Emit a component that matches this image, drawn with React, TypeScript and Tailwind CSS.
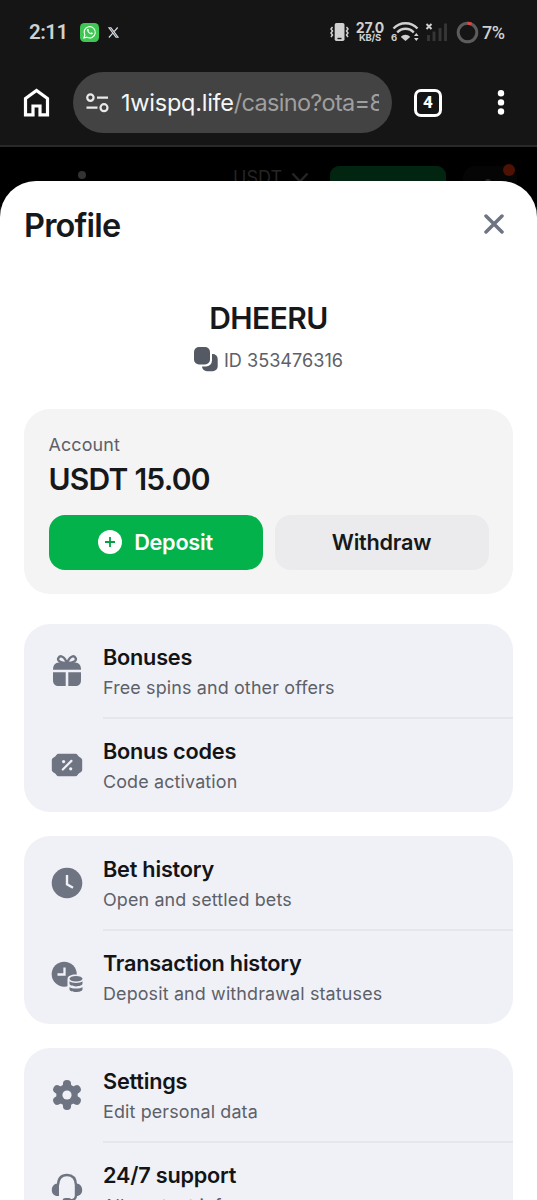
import type { ReactNode } from "react";

const ink = "#6f7482";

function GiftIcon() {
  return (
    <svg width="32" height="34" viewBox="0 0 32 34" fill={ink}>
      <path d="M15.800 9C9 8.800 6.300 6.800 7.300 4.200C8.800 .9 13.600 2 15.800 9ZM16.200 9C18.400 2 23.200 .9 24.700 4.200C25.700 6.800 23 8.800 16.200 9Z" fill="none" stroke={ink} strokeWidth="2.400" />
      <path d="M8 8.500h16c4 0 6 3 6 7.300H2c0-4.300 2-7.300 6-7.300Z" />
      <path d="M2 18.200h12.700V32H8c-4 0-6-2-6-6ZM17.300 18.200H30V26c0 4-2 6-6 6h-6.700Z" />
    </svg>
  );
}

function CouponIcon() {
  return (
    <svg width="32" height="32" viewBox="0 0 32 32">
      <path d="M7.500 4.800h17c1.800 0 2.200 1.600 3 2.400.9.900 3.700 1.700 3.700 4v9.600c0 2.300-2.800 3.100-3.700 4-.8.800-1.200 2.400-3 2.400h-17c-1.800 0-2.200-1.600-3-2.400-.9-.9-3.700-1.700-3.700-4v-9.600c0-2.300 2.800-3.100 3.700-4 .8-.8 1.200-2.400 3-2.400Z" fill={ink} />
      <path d="m11.800 20.500 8.600-8.600" stroke="#f0f1f6" strokeWidth="2.200" strokeLinecap="round" />
      <circle cx="12.600" cy="12.600" r="1.600" fill="#f0f1f6" />
      <circle cx="19.700" cy="19.800" r="1.600" fill="#f0f1f6" />
    </svg>
  );
}

function ClockIcon() {
  return (
    <svg width="32" height="32" viewBox="0 0 32 32">
      <circle cx="16" cy="16" r="15.300" fill={ink} />
      <path d="M16 8v9.300l6 3.400" fill="none" stroke="#f0f1f6" strokeWidth="2.400" />
    </svg>
  );
}

function TransactionIcon() {
  return (
    <svg width="32" height="32" viewBox="0 0 32 32">
      <circle cx="13.200" cy="13.200" r="12.500" fill={ink} />
      <path d="M13.500 6.500v7H6.500" fill="none" stroke="#f0f1f6" strokeWidth="2.300" />
      <path d="M16.500 18c0-3 3.500-4.500 8-4.500s8 1.500 8 4.500v14h-16Z" fill="#f0f1f6" />
      <ellipse cx="25" cy="17.800" rx="6.500" ry="2.800" fill={ink} />
      <path d="M18.500 20.300c2.500 2.100 10.500 2.100 13 0v2.300c0 3.700-13 3.700-13 0ZM18.500 26c2.500 2.100 10.500 2.100 13 0v2.300c0 3.700-13 3.700-13 0Z" fill={ink} />
    </svg>
  );
}

function GearIcon() {
  return (
    <svg width="32" height="32" viewBox="0 0 32 32">
      <g stroke={ink} strokeWidth="8.200" strokeLinecap="round">
        <path d="M16 5v22M6.300 10.400l19.400 11.200M6.300 21.600l19.400-11.200" />
      </g>
      <circle cx="16" cy="16" r="10.700" fill={ink} />
      <circle cx="16" cy="16" r="4.600" fill="#f0f1f6" />
    </svg>
  );
}

function HeadsetIcon() {
  return (
    <svg width="32" height="32" viewBox="0 0 32 32">
      <path d="M7 12C7.300 5.500 10.500 2 16 2s8.700 3.500 9 10v10c0 4-2 5.500-7 5.500" fill="none" stroke={ink} strokeWidth="2.400" />
      <path d="M8 10.500v12.500H6.500C3 23 .8 20.500.8 17S3 10.500 6.500 10.500ZM24 10.500v12.500h1.500c3.500 0 5.700-2.500 5.700-6s-2.200-6.500-5.700-6.500Z" fill={ink} />
      <rect x="11.500" y="25" width="9" height="5.500" rx="2.700" fill={ink} />
    </svg>
  );
}

function Row({ icon, title, note, first }: { icon: ReactNode; title: string; note: string; first?: boolean }) {
  return (
    <div className="flex h-[94px] shrink-0 pl-[26.500px]">
      <div className="flex w-[52.500px] shrink-0 items-center">{icon}</div>
      <div className="flex flex-1 flex-col">
        <div className="mt-[19px] text-[21.700px] leading-[28px] font-semibold tracking-[-0.220px] whitespace-nowrap text-[#131416]">{title}</div>
        <div className="mt-[5px] text-[17.900px] leading-[24px] tracking-[0.150px] whitespace-nowrap text-[#5d6068]">{note}</div>
        {first && <div className="mt-[17px] h-[2px] shrink-0 bg-[#e6e7eb]" />}
      </div>
    </div>
  );
}

function Group({ children }: { children: ReactNode }) {
  return <section className="shrink-0 overflow-hidden rounded-[26px] bg-[#f0f1f6]">{children}</section>;
}

function StatusBar() {
  return (
    <div className="flex h-[64px] items-center px-[29px] text-[#d0d0d0]">
      <span className="w-[51px] font-[Roboto] text-[20.500px] font-semibold tracking-[-0.5px]">2:11</span>
      <svg width="19" height="19" viewBox="0 0 19 19">
        <rect width="19" height="19" rx="4.500" fill="#3fc653" />
        <path d="m3.900 15 .9-3A5.600 5.600 0 1 1 7 14.200Z" fill="none" stroke="#f1fff2" strokeWidth="1.200" />
        <path d="M7.300 6.100c-1.500 1.400 2.600 6.300 4.900 5.200.8-.5.900-1 .7-1.300l-1.500-.7-.8.7c-1-.4-1.700-1.100-2.100-2l.5-.7-.6-1.300Z" fill="#f1fff2" />
      </svg>
      <svg className="ml-[9px]" width="11" height="11" viewBox="0 0 11 11" fill="none" stroke="#d6dbe0">
        <path d="M1 .8h2L10 10.200H8Z" strokeWidth="1.100" />
        <path d="M9.700.5 6.100 4.700M4.800 6.200.9 10.500" strokeWidth="1.200" />
      </svg>
      <svg className="ml-auto" width="19" height="20" viewBox="0 0 19 20">
        <rect x="4.700" y="1" width="9.800" height="18" rx="1.800" fill="#d0d0d0" />
        <path d="M7.500 16.500h4" stroke="#161616" strokeWidth="1.400" />
        <path d="m2.500 5-1.500 2 1.500 2L1 11l1.500 2L1 15M16.500 5l1.500 2-1.500 2 1.500 2-1.500 2 1.500 2" fill="none" stroke="#d0d0d0" strokeWidth="1.500" />
      </svg>
      <div className="ml-[7px] flex w-[28px] flex-col items-center font-[Inter] whitespace-nowrap">
        <span className="text-[14px] leading-[11px] font-bold tracking-[-0.150px]">27.0</span>
        <span className="text-[9.500px] leading-[10px] font-bold tracking-[-0.3px]">KB/S</span>
      </div>
      <svg className="ml-[7px]" width="28" height="22" viewBox="0 0 28 22" fill="none" stroke="#d0d0d0">
        <path d="M2.500 7.500c6.500-7 17.500-7 24 0M6.200 11.500c4.500-5 12.100-5 16.600 0" strokeWidth="2.300" />
        <path d="M9.800 16c2.500-3 6.900-3 9.400 0L14.500 20Z" fill="#d0d0d0" stroke="none" />
        <path d="m23 15 2.300-3 2.300 3ZM23 17l2.300 3 2.300-3Z" fill="#d0d0d0" stroke="none" />
        <text x="0" y="20" fill="#d0d0d0" stroke="none" fontSize="9.500" fontWeight="700" fontFamily="Inter">6</text>
      </svg>
      <svg className="ml-[6px]" width="23" height="20" viewBox="0 0 23 20">
        <path d="m1.500 2 5 5m0-5-5 5" stroke="#d0d0d0" strokeWidth="1.900" />
        <path d="M3.500 13v6M9 9.500V19M15 6v13M20.500 1.500V19" stroke="#363636" strokeWidth="2.900" />
      </svg>
      <svg className="ml-[8px]" width="23" height="23" viewBox="0 0 23 23" fill="none" strokeWidth="3">
        <circle cx="11.500" cy="11.500" r="9.300" stroke="#5c5c5c" />
        <path d="M11.500 2.200A9.300 9.300 0 0 1 15.500 3.100" stroke="#e04444" />
      </svg>
      <span className="mr-[2px] ml-[3px] w-[24px] font-[Roboto] text-[18px] font-medium tracking-[-0.5px] whitespace-nowrap">7%</span>
    </div>
  );
}

function BrowserBar() {
  return (
    <div className="flex h-[83px] border-b-2 border-[#292929] pt-[8px]">
      <svg className="mt-[16px] ml-[23px]" width="27" height="29" viewBox="0 0 27 29" fill="none" stroke="#fff" strokeWidth="3.200">
        <path d="M2.500 10.500 13.500 2.500l11 8v16.400H17V18h-7v8.900H2.500Z" />
      </svg>
      <div className="ml-[23px] flex h-[61px] w-[319px] items-center rounded-full bg-[#434343] pl-[13px]">
        <svg width="23" height="20" viewBox="0 0 23 20" fill="none" stroke="#e9e9e9" strokeWidth="2.200">
          <circle cx="4.400" cy="4.600" r="3.200" />
          <path d="M11 4.600h11M.5 14.700h11" />
          <circle cx="18" cy="14.700" r="3.500" />
        </svg>
        <div className="ml-[12px] w-[258px] overflow-hidden font-[Inter] text-[23.500px] leading-[34px] tracking-[-0.7px] whitespace-nowrap text-[#9f9f9f]">
          <span className="tracking-[-0.250px] text-[#f6f6f6]">1wispq.life</span>/casino?ota=8
        </div>
      </div>
      <div className="mt-[17px] ml-[22px] flex size-[28px] items-center justify-center rounded-[7px] border-[3px] border-white font-[Roboto] text-[17px] font-extrabold text-white">4</div>
      <svg className="mt-[17px] ml-[55px]" width="8" height="27" viewBox="0 0 8 27" fill="#fff">
        <circle cx="4" cy="4.300" r="3.200" />
        <circle cx="4" cy="13.400" r="3.200" />
        <circle cx="4" cy="22.500" r="3.200" />
      </svg>
    </div>
  );
}

function Backdrop() {
  return (
    <div className="flex h-[60px] items-start bg-black">
      <div className="mt-[24px] ml-[78px] size-[8px] rounded-full bg-[#333]" />
      <div className="mt-[18px] ml-[147px] w-[60px] font-[Inter] text-[18px] leading-[26px] text-[#252525]">USDT</div>
      <svg className="mt-[25px] -ml-[2px]" width="18" height="12" viewBox="0 0 18 12" fill="none" stroke="#252525" strokeWidth="2.500">
        <path d="m1.500 1.500 7.500 8 7.500-8" />
      </svg>
      <div className="mt-[19px] ml-[21px] h-[41px] w-[116px] rounded-[9px] bg-[#022512]" />
      <div className="relative mt-[19px] ml-[17px] h-[41px] w-[54px] rounded-[12px] bg-[#050505]">
        <div className="absolute top-[13px] left-[22px] size-[6px] rounded-full bg-[#2a2a2a]" />
        <div className="absolute -top-[2px] left-[40px] size-[12px] rounded-full bg-[#4d1204]" />
      </div>
    </div>
  );
}

export default function App() {
  return (
    <div className="flex h-[1200px] w-[537px] flex-col overflow-hidden bg-[#151515]">
      <StatusBar />
      <BrowserBar />
      <Backdrop />
      <main className="relative -mt-[26px] flex min-h-0 flex-1 flex-col overflow-hidden rounded-t-[36px] bg-white px-[24px] font-[Inter]">
        <header className="flex h-[86px] shrink-0 items-center justify-between pr-[9px] text-[#17181a]">
          <h1 className="mt-[4px] text-[32.500px] leading-[40px] font-semibold tracking-[-0.8px]">Profile</h1>
          <svg width="20" height="20" viewBox="0 0 20 20" stroke={ink} strokeWidth="3.500" strokeLinecap="round">
            <path d="m2 2 16 16m0-16-16 16" />
          </svg>
        </header>
        <div className="flex h-[141.500px] shrink-0 flex-col items-center pt-[30.500px] text-[#17181a]">
          <h2 className="text-[30px] leading-[40px] font-semibold tracking-[-0.6px]">DHEERU</h2>
          <div className="mt-[8px] flex items-center text-[18.100px] leading-[28px] text-[#5d6068]">
            <svg className="mr-[6px]" width="24" height="25" viewBox="0 0 24 25" fill="#545963">
              <rect x="8" y="7" width="15.700" height="17.200" rx="5" />
              <rect x="-2" y="-2" width="20" height="21.500" rx="6" fill="#fff" />
              <rect x="0" y="0" width="16" height="17.500" rx="5" />
            </svg>
            ID 353476316
          </div>
        </div>
        <section className="mb-[30.500px] h-[185px] shrink-0 rounded-[26px] bg-[#f4f4f4] px-[24.500px] pt-[24px]">
          <div className="text-[17.900px] leading-[24px] tracking-[0.150px] text-[#5d6068]">Account</div>
          <div className="mt-[2px] text-[30px] leading-[40px] font-semibold tracking-[-0.750px] text-[#17181a]">USDT 15.00</div>
          <div className="mt-[16px] flex gap-[12px] text-[21.700px] font-semibold tracking-[-0.250px]">
            <button className="flex h-[55px] flex-1 items-center justify-center rounded-[16px] bg-[#03b24b] text-white">
              <svg className="mr-[12px]" width="24" height="24" viewBox="0 0 24 24">
                <circle cx="12" cy="12" r="12" fill="#fff" />
                <path d="M12 7v10M7 12h10" stroke="#03a045" strokeWidth="1.800" />
              </svg>
              Deposit
            </button>
            <button className="h-[55px] flex-1 rounded-[16px] bg-[#ebebed] text-[#17181a]">Withdraw</button>
          </div>
        </section>
        <div className="flex flex-col gap-[24px]">
          <Group>
            <Row first icon={<GiftIcon />} title="Bonuses" note="Free spins and other offers" />
            <Row icon={<CouponIcon />} title="Bonus codes" note="Code activation" />
          </Group>
          <Group>
            <Row first icon={<ClockIcon />} title="Bet history" note="Open and settled bets" />
            <Row icon={<TransactionIcon />} title="Transaction history" note="Deposit and withdrawal statuses" />
          </Group>
          <Group>
            <Row first icon={<GearIcon />} title="Settings" note="Edit personal data" />
            <Row icon={<HeadsetIcon />} title="24/7 support" note="All contact info" />
          </Group>
        </div>
      </main>
    </div>
  );
}
